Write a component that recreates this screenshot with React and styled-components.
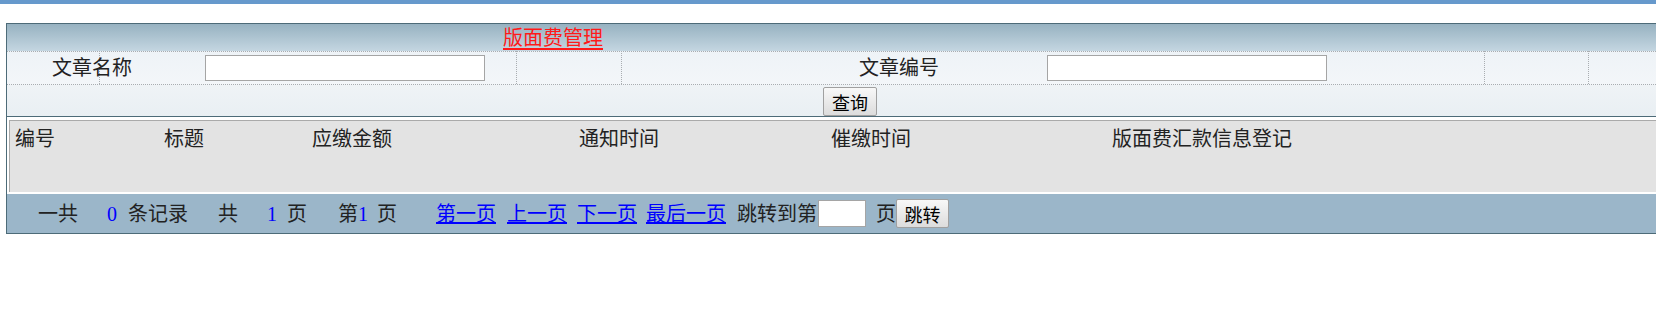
import React from 'react';
import styled, { createGlobalStyle } from 'styled-components';

const GlobalStyle = createGlobalStyle`
    html, body {
        margin: 0;
        padding: 0;
        background: #fff;
        overflow: hidden;
    }
    body {
        font-family: "Liberation Serif", "Noto Sans CJK SC", serif;
        color: #222;
    }
`;

const dot = '#a9adb1';
const hDots = `repeating-linear-gradient(to right, ${dot} 0 1px, transparent 1px 2px)`;
const vDots = `repeating-linear-gradient(to bottom, ${dot} 0 1px, transparent 1px 2px)`;
const vLines = [92, 509, 614, 1477, 1581];

const S = {
    TopBar: styled.div`
        height: 4px;
        background: #6699cc;
    `,
    Page: styled.div`
        padding: 19px 0 0 6px;
        width: max-content;
    `,
    Panel: styled.div`
        width: 1686px;
        border: 1px solid #4d6b78;
        background: #fff;
    `,
    Header: styled.div`
        height: 27px;
        display: flex;
        align-items: center;
        padding-left: 496px;
        background: linear-gradient(#97b2c1, #c4d6e1);
    `,
    Title: styled.a`
        color: #ff1a1a;
        font-size: 20px;
        line-height: 1;
        text-decoration: underline;
        text-decoration-thickness: 2px;
        text-underline-offset: 3px;
        cursor: pointer;
    `,
    SearchRow: styled.div`
        display: grid;
        grid-template-columns: 170px 340px 234px 296px 1fr;
        align-items: center;
        height: 34px;
        background:
            ${hDots} 0 0 / 100% 1px no-repeat,
            ${hDots} 0 100% / 100% 1px no-repeat,
            ${vLines.map((x) => `${vDots} ${x}px 0 / 1px 100% no-repeat`).join(',\n')},
            linear-gradient(#eef3f7, #f3f6f9);
    `,
    Label: styled.div`
        font-size: 20px;
        line-height: 1;
        text-align: center;
        white-space: nowrap;
    `,
    InputCell: styled.div`
        padding-left: ${(p) => p.$indent || 0}px;
        display: flex;
        align-items: center;
    `,
    TextInput: styled.input`
        box-sizing: border-box;
        width: ${(p) => p.$width}px;
        height: ${(p) => p.$height}px;
        border: 1px solid #a5a5a5;
        background: #fff;
        margin: 0;
        padding: 0 3px;
        outline: none;
    `,
    ButtonRow: styled.div`
        height: 31px;
        display: flex;
        justify-content: center;
        align-items: flex-end;
        background: linear-gradient(#eff3f6, #e9eff3);
        border-bottom: 1px solid #4d6b78;
    `,
    Button: styled.button`
        box-sizing: border-box;
        height: 29px;
        width: ${(p) => p.$width}px;
        padding: 0;
        margin: 0;
        font-family: "Noto Sans CJK SC", sans-serif;
        font-size: 18px;
        line-height: 1;
        color: #000;
        border: 1px solid #a0a0a0;
        border-radius: 2px;
        background: linear-gradient(#f8f8f8, #dcdcdc);
        cursor: pointer;
    `,
    GridArea: styled.div`
        margin: 3px 0 2px 2px;
        height: 71px;
        border-top: 1px solid #aaa;
        border-left: 1px solid #aaa;
        background: #e3e3e3;
    `,
    GridHead: styled.div`
        display: grid;
        grid-template-columns: 149px 148px 267px 252px 281px 1fr;
        height: 36px;
        align-items: center;
    `,
    HeadCell: styled.div`
        padding-left: 5px;
        font-size: 20px;
        line-height: 1;
        white-space: nowrap;
    `,
    Footer: styled.div`
        height: 39px;
        display: flex;
        align-items: center;
        padding-left: 31px;
        background: #9bb6c9;
        font-size: 20px;
        line-height: 1;
    `,
    Item: styled.span`
        margin-left: ${(p) => p.$gap || 0}px;
        color: ${(p) => (p.$num ? '#0000ff' : '#222')};
        white-space: nowrap;
    `,
    PageLink: styled.a`
        margin-left: ${(p) => p.$gap || 0}px;
        color: #0000ff;
        text-decoration: underline;
        white-space: nowrap;
        cursor: pointer;
    `,
};

const columns = ['编号', '标题', '应缴金额', '通知时间', '催缴时间', '版面费汇款信息登记'];

const App = () => {
    return (
        <>
            <GlobalStyle />
            <S.TopBar />
            <S.Page>
                <S.Panel>
                    <S.Header>
                        <S.Title>版面费管理</S.Title>
                    </S.Header>
                    <S.SearchRow>
                        <S.Label>文章名称</S.Label>
                        <S.InputCell $indent={28}>
                            <S.TextInput $width={280} $height={26} />
                        </S.InputCell>
                        <div />
                        <S.Label>文章编号</S.Label>
                        <S.InputCell>
                            <S.TextInput $width={280} $height={26} />
                        </S.InputCell>
                    </S.SearchRow>
                    <S.ButtonRow>
                        <S.Button $width={54}>查询</S.Button>
                    </S.ButtonRow>
                    <S.GridArea>
                        <S.GridHead>
                            {columns.map((c) => (
                                <S.HeadCell key={c}>{c}</S.HeadCell>
                            ))}
                        </S.GridHead>
                    </S.GridArea>
                    <S.Footer>
                        <S.Item>一共</S.Item>
                        <S.Item $gap={29} $num>0</S.Item>
                        <S.Item $gap={11}>条记录</S.Item>
                        <S.Item $gap={30}>共</S.Item>
                        <S.Item $gap={29} $num>1</S.Item>
                        <S.Item $gap={10}>页</S.Item>
                        <S.Item $gap={31}>第</S.Item>
                        <S.Item $num>1</S.Item>
                        <S.Item $gap={9}>页</S.Item>
                        <S.PageLink $gap={39}>第一页</S.PageLink>
                        <S.PageLink $gap={11}>上一页</S.PageLink>
                        <S.PageLink $gap={10}>下一页</S.PageLink>
                        <S.PageLink $gap={9}>最后一页</S.PageLink>
                        <S.Item $gap={11}>跳转到第</S.Item>
                        <S.InputCell $indent={1}>
                            <S.TextInput $width={48} $height={27} />
                        </S.InputCell>
                        <S.Item $gap={10}>页</S.Item>
                        <S.Button $width={53}>跳转</S.Button>
                    </S.Footer>
                </S.Panel>
            </S.Page>
        </>
    );
};

export default App;
